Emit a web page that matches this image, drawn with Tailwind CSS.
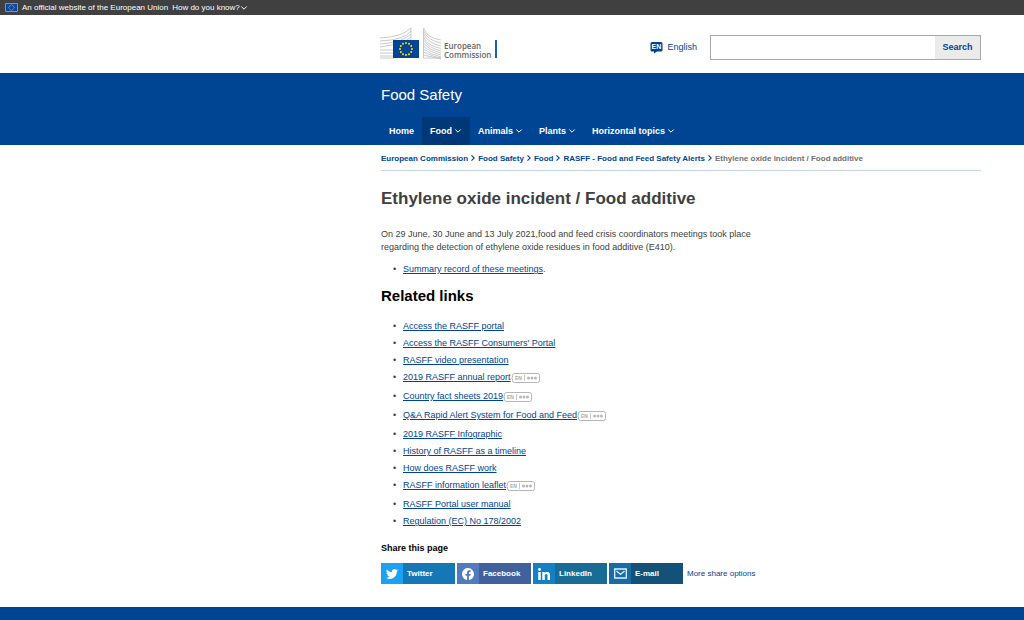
<!DOCTYPE html>
<html lang="en">
<head>
<meta charset="utf-8">
<meta name="viewport" content="width=device-width, initial-scale=1">
<title>Ethylene oxide incident / Food additive</title>
<script src="https://cdn.jsdelivr.net/npm/@tailwindcss/browser@4"></script>
</head>
<body class="min-h-screen flex flex-col bg-white font-['Liberation_Sans',Arial,sans-serif] text-[9px] leading-[13px] text-[#404040]">
<svg class="hidden" aria-hidden="true">
  <symbol id="down" viewBox="0 0 8 6"><path d="M1.3 1.5 4 4.2 6.7 1.5" fill="none" stroke="currentColor" stroke-width="1"/></symbol>
  <symbol id="right" viewBox="0 0 6 8"><path d="M1.5 1.3 4.2 4 1.5 6.7" fill="none" stroke="currentColor" stroke-width="1.1"/></symbol>
  <symbol id="stars" viewBox="-12 -12 24 24"><g fill="#ffdf00"><circle cy="-9" r="1.5"/><circle cx="4.5" cy="-7.8" r="1.5"/><circle cx="7.8" cy="-4.5" r="1.5"/><circle cx="9" r="1.5"/><circle cx="7.8" cy="4.5" r="1.5"/><circle cx="4.5" cy="7.8" r="1.5"/><circle cy="9" r="1.5"/><circle cx="-4.5" cy="7.8" r="1.5"/><circle cx="-7.8" cy="4.5" r="1.5"/><circle cx="-9" r="1.5"/><circle cx="-7.8" cy="-4.5" r="1.5"/><circle cx="-4.5" cy="-7.8" r="1.5"/></g></symbol>
  <symbol id="langs" viewBox="0 0 29 10"><path d="M3.5.5h23a2 2 0 0 1 2 2v5a2 2 0 0 1-2 2h-23a2 2 0 0 1-2-2V6L.6 5l.9-1V2.500a2 2 0 0 1 2-2Z" fill="#fff" stroke="#b5b5b5"/><path d="M13.500 2v6" stroke="#c8c8c8"/><g fill="#b8b8b8"><circle cx="17.500" cy="5" r="1.500"/><circle cx="21" cy="5" r="1.500"/><circle cx="24.500" cy="5" r="1.500"/></g><text x="4" y="7" font-size="5" font-weight="700" fill="#aaa">EN</text></symbol>
</svg>

<div class="h-[15px] bg-[#404040] text-white text-[8px] flex items-center pl-[5px]">
  <svg class="w-[13px] h-[9px] mr-1" viewBox="0 0 13 9" aria-hidden="true"><path d="M.5.5h12v8H.5z" fill="#0e47a1" stroke="#7894bd"/><use href="#stars" x="3" y="1" width="7" height="7"/></svg>
  <span>An official website of the European Union</span>
  <button class="ml-1 flex items-center">How do you know? <svg class="w-2 h-[6px]"><use href="#down"/></svg></button>
</div>

<header class="h-[58px] pl-[380px] pr-[43px] flex items-center">
  <a href="#" aria-label="European Commission" class="flex self-start mt-3">
    <svg class="w-[120px] h-9" viewBox="0 0 120 36">
      <g fill="none" stroke="#c4c4c4" stroke-width=".9">
        <path d="M0 11Q22 10 31 1M0 14Q24 13 31 4M0 17Q24 15 31 7M0 20Q24 17 31 10M0 23H14M0 26H14M0 29H14M0 31H14M31 1v12"/>
        <path d="M43.500 1Q47 11 61 13M43.500 4Q47 13 61 16M43.500 7Q48 16 61 19M43.500 10Q48 19 61 21.500M43.500 13Q49 21 61 24M43.500 16Q49 23 61 26M43.500 19Q50 25 61 28M43.500 22Q50 27 61 30M43.500 25Q52 29 61 31.500M43.500 28 61 32M43.500 31H61M43.500 1v30"/>
      </g>
      <path d="M13 13h26v18H13z" fill="#004494"/>
      <use href="#stars" x="18" y="14" width="16" height="16"/>
      <path d="M115 13h2v18h-2z" fill="#1d5cb0"/>
      <text font-family="Open Sans, sans-serif" font-size="8" font-weight="600" fill="#666"><tspan x="64" y="22">European</tspan><tspan x="64" y="31">Commission</tspan></text>
    </svg>
  </a>
  <form class="ml-auto mt-[6px] flex items-center">
    <button type="button" class="flex items-center gap-1 text-[#004494] mr-[13px]">
      <svg class="w-[13px] h-[13px]" viewBox="0 0 13 13"><path d="M2 1h9a1.500 1.500 0 0 1 1.500 1.500V9A1.500 1.500 0 0 1 11 10.500H7L4 12.500v-2H2A1.500 1.500 0 0 1 .5 9V2.500A1.500 1.500 0 0 1 2 1Z" fill="#004494"/><text x="1.500" y="8.300" font-size="7" font-weight="700" fill="#fff">EN</text></svg>
      English
    </button>
    <div class="flex w-[271px] h-[25px] border border-[#a8a8a8]">
      <input type="text" aria-label="Search" class="min-w-0 flex-1 px-2 outline-none">
      <button type="submit" class="w-[45px] bg-[#ebebeb] text-[#004494] font-bold">Search</button>
    </div>
  </form>
</header>

<div class="bg-[#004494] text-white pl-[381px] pr-[43px] pt-3">
  <div class="text-[15px] leading-5">Food Safety</div>
  <nav class="flex mt-3 h-7 font-bold" aria-label="Main">
    <a href="#" class="flex items-center px-2">Home</a>
    <a href="#" class="flex items-center px-2 gap-[2px] bg-[#003776]">Food <svg class="w-2 h-[6px]"><use href="#down"/></svg></a>
    <a href="#" class="flex items-center px-2 gap-[2px]">Animals <svg class="w-2 h-[6px]"><use href="#down"/></svg></a>
    <a href="#" class="flex items-center px-2 gap-[2px]">Plants <svg class="w-2 h-[6px]"><use href="#down"/></svg></a>
    <a href="#" class="flex items-center px-2 gap-[2px]">Horizontal topics <svg class="w-2 h-[6px]"><use href="#down"/></svg></a>
  </nav>
</div>

<main class="pl-[381px] pr-[43px] flex-1">
  <nav aria-label="Breadcrumb" class="h-[26px] pt-px flex items-center gap-[2px] text-[8px] font-bold text-[#004494] border-b border-[#c3d4e8] whitespace-nowrap">
    <a href="#">European Commission</a><svg class="w-[6px] h-2"><use href="#right"/></svg>
    <a href="#">Food Safety</a><svg class="w-[6px] h-2"><use href="#right"/></svg>
    <a href="#">Food</a><svg class="w-[6px] h-2"><use href="#right"/></svg>
    <a href="#">RASFF - Food and Feed Safety Alerts</a><svg class="w-[6px] h-2"><use href="#right"/></svg>
    <span class="text-[#707070]">Ethylene oxide incident / Food additive</span>
  </nav>
  <h1 class="mt-4 text-[17px] leading-6 font-bold">Ethylene oxide incident / Food additive</h1>
  <p class="mt-[17px] max-w-[370px]">On 29 June, 30 June and 13 July 2021,food and feed crisis coordinators meetings took place regarding the detection of ethylene oxide residues in food additive (E410).</p>
  <ul class="mt-[7px] pl-[22px] leading-[17px] *:before:content-['•'] *:before:inline-block *:before:w-[10px] *:before:-ml-[10px]">
    <li><a href="#" class="text-[#004494] underline">Summary record of these meetings</a>.</li>
  </ul>
  <h2 class="mt-2 text-[15px] leading-5 font-bold text-black">Related links</h2>
  <ul class="mt-3 pl-[22px] leading-[17px] *:before:content-['•'] *:before:inline-block *:before:w-[10px] *:before:-ml-[10px]">
    <li><a href="#" class="text-[#004494] underline">Access the RASFF portal</a></li>
    <li><a href="#" class="text-[#004494] underline">Access the RASFF Consumers' Portal</a></li>
    <li><a href="#" class="text-[#004494] underline">RASFF video presentation</a></li>
    <li class="pb-[2px]"><a href="#" class="text-[#004494] underline">2019 RASFF annual report</a><button aria-label="Other languages" class="align-middle"><svg class="w-[29px] h-[10px]"><use href="#langs"/></svg></button></li>
    <li class="pb-[2px]"><a href="#" class="text-[#004494] underline">Country fact sheets 2019</a><button aria-label="Other languages" class="align-middle"><svg class="w-[29px] h-[10px]"><use href="#langs"/></svg></button></li>
    <li class="pb-[2px]"><a href="#" class="text-[#004494] underline">Q&amp;A Rapid Alert System for Food and Feed</a><button aria-label="Other languages" class="align-middle"><svg class="w-[29px] h-[10px]"><use href="#langs"/></svg></button></li>
    <li><a href="#" class="text-[#004494] underline">2019 RASFF Infographic</a></li>
    <li><a href="#" class="text-[#004494] underline">History of RASFF as a timeline</a></li>
    <li><a href="#" class="text-[#004494] underline">How does RASFF work</a></li>
    <li class="pb-[2px]"><a href="#" class="text-[#004494] underline">RASFF information leaflet</a><button aria-label="Other languages" class="align-middle"><svg class="w-[29px] h-[10px]"><use href="#langs"/></svg></button></li>
    <li><a href="#" class="text-[#004494] underline">RASFF Portal user manual</a></li>
    <li><a href="#" class="text-[#004494] underline">Regulation (EC) No 178/2002</a></li>
  </ul>
  <section class="mt-3">
    <h3 class="font-bold text-black">Share this page</h3>
    <div class="mt-2 flex items-center gap-[2px] text-[8px] text-white font-bold">
      <a href="#" class="flex items-center w-[74px] h-[21px] bg-[#1577b5]"><span class="w-[22px] h-full flex items-center justify-center bg-[#1da1f2]"><svg class="w-[12px] h-[12px]" viewBox="0 0 24 24" fill="#fff"><path d="M24 4.600a10 10 0 0 1-2.800.8 5 5 0 0 0 2.200-2.700 10 10 0 0 1-3.100 1.200 4.900 4.900 0 0 0-8.400 4.500A14 14 0 0 1 1.700 3.100a4.900 4.900 0 0 0 1.500 6.600 4.900 4.900 0 0 1-2.200-.6 4.900 4.900 0 0 0 3.900 4.900 5 5 0 0 1-2.200.1 4.900 4.900 0 0 0 4.600 3.400A9.900 9.900 0 0 1 0 19.500 14 14 0 0 0 21.500 7.100 10 10 0 0 0 24 4.600Z"/></svg></span><span class="ml-1">Twitter</span></a>
      <a href="#" class="flex items-center w-[74px] h-[21px] bg-[#41619d]"><span class="w-[22px] h-full flex items-center justify-center bg-[#507cbe]"><svg class="w-[12px] h-[12px]" viewBox="0 0 24 24" fill="#fff"><path d="M24 12a12 12 0 1 0-13.900 11.900v-8.400H7.100V12h3V9.400c0-3 1.800-4.700 4.500-4.700 1.300 0 2.700.2 2.700.2v3h-1.500c-1.500 0-2 .9-2 1.900V12h3.400l-.5 3.500h-2.900v8.400A12 12 0 0 0 24 12Z"/></svg></span><span class="ml-1">Facebook</span></a>
      <a href="#" class="flex items-center w-[74px] h-[21px] bg-[#186d97]"><span class="w-[22px] h-full flex items-center justify-center bg-[#1380c4]"><svg class="w-[12px] h-[12px]" viewBox="0 0 24 24" fill="#fff"><circle cx="3" cy="3" r="2.900"/><path d="M.5 8.200h5V24h-5zM8.600 8.200h4.800v2.200c.8-1.500 2.500-2.600 4.900-2.600 4.600 0 5.700 3 5.700 7.300V24h-5v-8c0-2 0-4-2.600-4s-2.800 2-2.800 4v8h-5z"/></svg></span><span class="ml-1">LinkedIn</span></a>
      <a href="#" class="flex items-center w-[74px] h-[21px] bg-[#135179]"><span class="w-[22px] h-full flex items-center justify-center bg-[#176ca5]"><svg class="w-[13px] h-[11px]" viewBox="0 0 13 11" fill="none" stroke="#e4eff7" stroke-width="1.300"><path d="M.7 1h11.600v9H.7zM2.500 3 6.500 6.500 10.500 3"/></svg></span><span class="ml-1">E-mail</span></a>
      <a href="#" class="ml-[2px] font-normal text-[#004494]">More share options</a>
    </div>
  </section>
</main>
<footer class="h-[13px] bg-[#004494]"></footer>
</body>
</html>
